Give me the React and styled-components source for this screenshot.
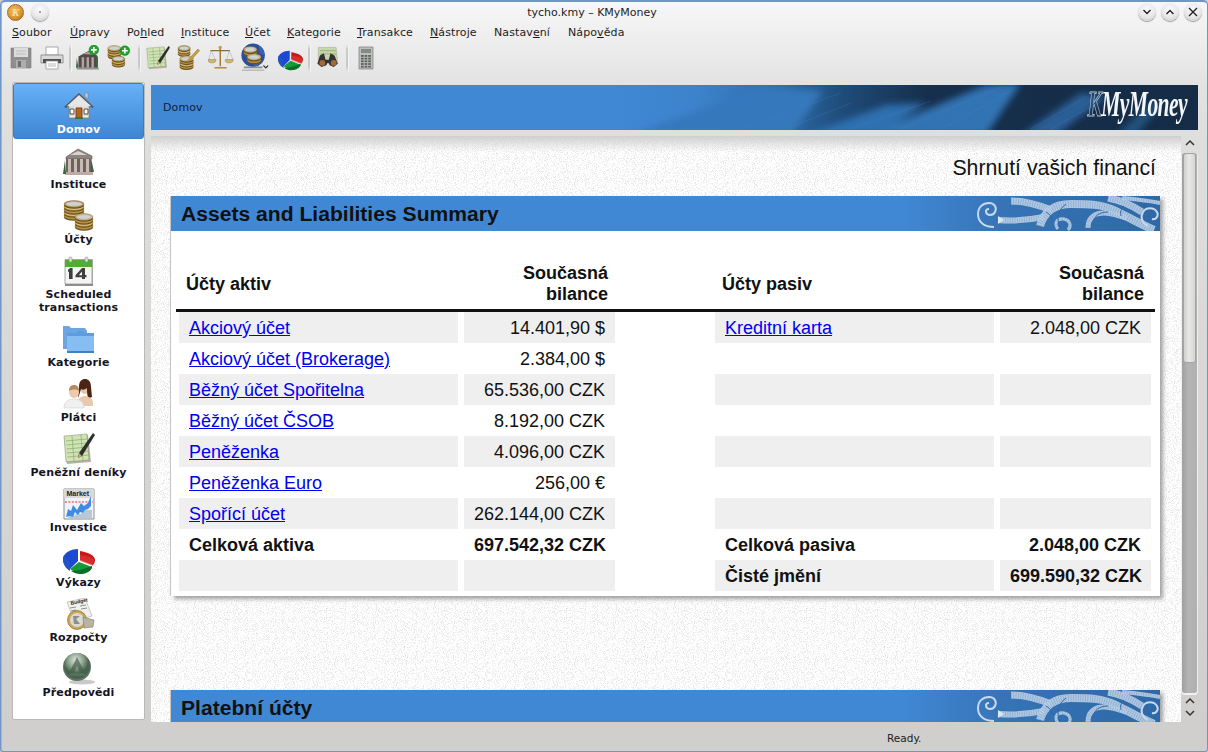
import React from "react";
import styled, { createGlobalStyle } from "styled-components";

const noise = `url("data:image/svg+xml,%3Csvg xmlns='http://www.w3.org/2000/svg' width='240' height='240'%3E%3Cfilter id='n'%3E%3CfeTurbulence type='fractalNoise' baseFrequency='1.1' numOctaves='2' seed='4'/%3E%3CfeColorMatrix values='0 0 0 0 .78 0 0 0 0 .78 0 0 0 0 .78 0 0 0 4 -1.9'/%3E%3C/filter%3E%3Crect width='240' height='240' fill='%23fff'/%3E%3Crect width='240' height='240' filter='url(%23n)'/%3E%3C/svg%3E")`;

const Global = createGlobalStyle`
  html, body { margin: 0; padding: 0; background: #d0cfcd; }
  #root { width: 1208px; height: 752px; overflow: hidden; }
  * { box-sizing: border-box; }
`;

const Win = styled.div`
  width: 1208px; height: 752px; display: flex; flex-direction: column; overflow: hidden;
  font-family: "DejaVu Sans", sans-serif; color: #1a1a1a;
  background: linear-gradient(#f7f7f7 0, #e2e2e2 85px, #dededd 140px, #d0cfcd 720px);
  border: 1px solid #6f95c9; border-width: 2px 1px 1px 1px; border-radius: 5px 5px 3px 3px;
  box-shadow: inset 1px 0 0 #9db7dc;
`;
const TitleBar = styled.div`
  height: 20px; flex: none; display: flex; align-items: center; position: relative; padding: 0 5px 0 4px;
`;
const TitleText = styled.div`
  flex: 1; text-align: center; font-size: 11px; color: #222; transform: translateX(1px);
`;
const WinBtn = styled.span`
  width: 18px; height: 18px; flex: none; border-radius: 50%;
  display: flex; align-items: center; justify-content: center; margin-left: ${p => p.$ml || 5}px;
  background: radial-gradient(circle at 50% 35%, #fafafa 0, #e8e8e8 55%, #bdbdbd 100%);
  box-shadow: 0 1px 1px #9a9a9a;
`;
const AppCoin = styled.span`
  width: 17px; height: 17px; flex: none; border-radius: 50%; margin-left: 2px; border: 1px solid #a8681a;
  background: radial-gradient(circle at 40% 35%, #f2bb5c 0, #d99a32 55%, #a5651a 100%);
  color: #f8e2ad; font: italic bold 11px "Liberation Serif", serif; display: flex; align-items: center; justify-content: center;
`;
const MenuBar = styled.nav`
  height: 20px; flex: none; display: flex; align-items: center; padding-left: 11px;
  font-size: 11px; letter-spacing: 0.1px; color: #1c1c1c;
`;
const MenuLabel = styled.span`
  white-space: pre; width: ${p => p.$w}px; flex: none;
  u { text-decoration: underline; text-underline-offset: 1px; }
`;
const ToolBar = styled.div`
  height: 32px; flex: none; display: flex; align-items: center; padding-left: 4px;
`;
const ToolBtn = styled.span`
  width: ${p => p.$w || 31}px; height: 30px; flex: none; display: flex; align-items: center; justify-content: center;
`;
const ToolSep = styled.span`
  width: 2px; height: 28px; flex: none; margin: 0 2px; background: linear-gradient(transparent, #c9c9c9 20%, #c9c9c9 80%, transparent); box-shadow: 1px 0 0 #f4f4f4;
`;
const Main = styled.div`
  flex: 1; min-height: 0; display: flex; gap: 6px; padding: 8px 9px 0 11px;
`;
const Side = styled.aside`
  width: 133px; height: 638px; flex: none; background: #fff; border: 1px solid #b9b9b7; border-radius: 2px;
  display: flex; flex-direction: column; overflow: hidden;
`;
const SideItem = styled.div`
  display: flex; flex-direction: column; align-items: center; text-align: center;
  padding: 6px 0 3px;
  color: ${p => (p.$active ? "#fff" : "#14141e")};
  ${p => p.$active && `
    height: 56px; padding-bottom: 0; border: 1px solid #3a7cc4; border-radius: 3px;
    background: linear-gradient(#69b1f8 0, #559fe9 40%, #3f86d2 100%);
  `}
`;
const SideIcon = styled.span`
  width: 32px; height: 32px; display: block; flex: none;
`;
const SideLabel = styled.span`
  display: block; margin-top: 1px; font-size: 11px; line-height: 13px; font-weight: 700; letter-spacing: 0.15px;
`;
const Column = styled.div`
  flex: 1; min-width: 0; display: flex; flex-direction: column; margin-top: 3px; gap: 6px;
`;
const Banner = styled.header`
  height: 45px; flex: none; position: relative; overflow: hidden; display: flex; align-items: center; padding-left: 12px;
  font-size: 11px; color: #10223a; letter-spacing: 0.1px;
  background: linear-gradient(90deg, #4088d4 0, #4088d4 44%, #3d83cc 52%, #2f6dab 60%, #1f4c7a 66%, #162f4c 74%, #152c46 100%);
`;
const BannerArt = styled.svg`
  position: absolute; left: 0; top: 0; width: 100%; height: 100%;
`;
const BannerText = styled.span`
  position: relative;
`;
const Logo = styled.div`
  position: absolute; right: 11px; top: 0; height: 45px; display: flex; align-items: flex-start;
  font: italic 700 36px/38px "Liberation Serif", serif; color: #f4f6f8; letter-spacing: -1px; white-space: nowrap;
`;
const LogoInner = styled.span`
  display: inline-block; transform: scaleX(0.6); transform-origin: right center;
  span { color: transparent; -webkit-text-stroke: 0.9px #b9c3cd; }
`;
const ViewRow = styled.div`
  flex: 1; min-height: 0; display: flex;
`;
const Page = styled.main`
  flex: 1; min-width: 0; overflow: hidden; position: relative; padding: 20px 21px 0 20px;
  background-color: #fff; background-image: ${noise};
  &::before { content: ""; position: absolute; left: 0; right: 0; top: 0; height: 16px; background: linear-gradient(rgba(205,205,205,.95), rgba(255,255,255,0)); }
`;
const PageTitle = styled.h1`
  position: relative; margin: 0 4px 15px 0; text-align: right; font: 400 21.3px/25px "Liberation Sans", sans-serif; color: #111;
`;
const Panel = styled.section`
  background: #fff; box-shadow: 3px 3px 4px rgba(90,90,90,.55), -1px 0 0 #c8c8c8; padding-bottom: 5px; margin-bottom: 94px;
  position: relative;
`;
const PanelHead = styled.div`
  height: 35px; position: relative; overflow: hidden; padding-left: 10px; display: flex; align-items: center;
  background: linear-gradient(90deg, #4088d4 0, #4088d4 74%, #3674b6 84%, #2e68a6 100%);
  font: 700 21.1px/35px "Liberation Sans", sans-serif; color: #111;
`;
const Ornament = styled.svg`
  position: absolute; right: 0; top: 0; width: 184px; height: 35px;
`;
const Table = styled.div`
  padding: 32px 5px 0;
  font: 400 18px/31px "Liberation Sans", sans-serif; color: #111;
`;
const Row = styled.div`
  display: grid; grid-template-columns: 279px 151px 88px 279px 151px; column-gap: 6px; padding: 0 3px;
`;
const HeadRow = styled(Row)`
  padding-bottom: 4px; border-bottom: 3px solid #111; align-items: center; font-weight: 700; line-height: 21px;
`;
const HeadCell = styled.div`
  padding: 0 7px; text-align: ${p => (p.$right ? "right" : "left")};
`;
const Cell = styled.div`
  height: 31px; padding: 1px 10px 0; white-space: nowrap; text-align: ${p => (p.$right ? "right" : "left")};
  background: ${p => (p.$shade ? "#efefef" : "transparent")}; font-weight: ${p => (p.$bold ? 700 : 400)};
`;
const AccLink = styled.a`
  color: #0000f0; text-decoration: underline;
`;
const Scroll = styled.div`
  width: 17px; flex: none; display: flex; flex-direction: column; align-items: center;
`;
const ScrollArrow = styled.svg`
  width: 12px; height: 13px; flex: none; display: block;
`;
const Track = styled.div`
  width: 15px; height: 540px; flex: none; margin: 4px 0 1px; border-radius: 3px; background: linear-gradient(90deg, #9f9f9f, #b4b4b4 40%, #b0b0b0); box-shadow: 0 1px 0 1px #f0f0f0;
`;
const Thumb = styled.div`
  width: 13px; height: 210px; margin: 0 1px; border-radius: 3px; border: 1px solid #a4a4a4;
  background: linear-gradient(90deg, #cfcfce, #e8e8e6 45%, #d6d6d4);
`;
const Status = styled.footer`
  height: 29px; flex: none; display: flex; align-items: center; padding: 2px 0 0 886px; font-size: 10.5px; color: #222;
`;

/* icons */
const S = ({ size = 32, children, vb = "0 0 32 32" }) => (
  <svg width={size} height={size} viewBox={vb} style={{ display: "block" }}>{children}</svg>
);
const HouseI = p => (
  <S {...p}>
    <path d="M6 13h20v15H6z" fill="#f3efe6" stroke="#7d7a72" strokeWidth=".8" />
    <path d="M6 17h20M6 21h20M6 25h20" stroke="#c9c4b6" strokeWidth=".8" />
    <path d="M1 17 16 3l15 14-2 1L16 6 3 18z" fill="#55575c" />
    <path d="M4 16 16 5l12 11-1 0H5z" fill="#e6e6e6" />
    <path d="M22 3h3v6l-3-2.5z" fill="#c9c9c9" stroke="#777" strokeWidth=".5" />
    <path d="M13 18h6v10h-6z" fill="#b5651d" stroke="#5a3410" strokeWidth=".8" />
    <path d="M7 19h4v5H7zM21 19h4v5h-4z" fill="#fff" stroke="#55493a" strokeWidth="1" />
    <path d="M12 28.2h8" stroke="#2f7d2c" strokeWidth="1.4" />
  </S>
);
const BankI = p => (
  <S {...p}>
    <path d="M3 12 15 4l14 7v3H3z" fill="#8f8480" stroke="#5e5552" strokeWidth=".6" />
    <path d="M7 10 15 6l9 4z" fill="#d9d3cf" />
    <path d="M3 14h25v13H3z" fill="#6f625e" />
    <path d="M5 14h3v13H5zM11 14h3v13h-3zM17 14h3v13h-3zM23 14h3v13h-3z" fill="#c8bcb6" />
    <path d="M2 27h28v3H2z" fill="#bcaaa3" />
    <path d="M2 15 0 29h3z" fill="#35603a" />
    <path d="M28 13l3 14h-3z" fill="#38663e" />
  </S>
);
const Coin = ({ x, y, w = 16, n = 4 }) => (
  <g>
    {Array.from({ length: n }).map((_, i) => (
      <g key={i}>
        <ellipse cx={x} cy={y + (n - 1 - i) * 3 + 1.4} rx={w / 2} ry="3.4" fill="#6e5119" />
        <ellipse cx={x} cy={y + (n - 1 - i) * 3} rx={w / 2} ry="3.4" fill={i % 2 ? "#dcc27c" : "#bd9a4e"} stroke="#6f5420" strokeWidth=".4" />
      </g>
    ))}
    <ellipse cx={x} cy={y} rx={w / 2 - 1.6} ry="2.4" fill="#cfd2d0" stroke="#8e8f88" strokeWidth=".4" />
  </g>
);
const CoinsI = p => (
  <S {...p}>
    <Coin x={11} y={4} w={20} n={5} />
    <Coin x={21} y={17} w={18} n={4} />
  </S>
);
const CalI = p => (
  <S {...p}>
    <path d="M2 4h28v27H2z" fill="#bbb" />
    <path d="M2 5h27v24H2z" fill="#f4f4f4" stroke="#888" strokeWidth=".7" />
    <path d="M2 5h27v7H2z" fill="#4fae33" />
    <rect x="6" y="2" width="3" height="5" rx="1" fill="#ddd" stroke="#777" strokeWidth=".4" />
    <rect x="22" y="2" width="3" height="5" rx="1" fill="#ddd" stroke="#777" strokeWidth=".4" />
    <path d="M6 24h3.6v-11h-2.2l-2.4 1.8v2.3l1-.7zM19 13h3v7h1.5v2.2H22V24h-3v-1.8h-6.5v-2z M19 16.5l-3.2 3.7H19z" fill="#3e3e3e" fillRule="evenodd" />
    <path d="M2 29h28v2H2z" fill="#8d8d8d" />
  </S>
);
const FolderI = p => (
  <S {...p}>
    <path d="M0 3h6l2 2 14 0 2 3v18H0z" fill="#6ba6e2" />
    <path d="M4 10h9l2-2h5l2 2h9v20H4z" fill="#5c9ce0" />
    <path d="M4 13h27v17H4z" fill="#86bdf2" />
    <path d="M4 28h27v2H4z" fill="#4480bf" />
  </S>
);
const PeopleI = p => (
  <S {...p}>
    <ellipse cx="22" cy="10" rx="5" ry="6" fill="#e8c4a8" />
    <path d="M16 9c0-6 3-8 6-8s6 2 6 8l1 10c-2 1-3 1-4 1-1-4-1-7-1-10-2 2-5 2-6 1-1 3-2 7-3 9z" fill="#4b2413" />
    <path d="M15 24c0-4 4-6 7-6s8 2 8 7v3H15z" fill="#e8c9ad" />
    <ellipse cx="11" cy="14" rx="5" ry="6" fill="#efc9ac" />
    <path d="M6 13c0-4 2-6 5-6s5 2 5 6c-2-2-7-2-10 0z" fill="#b8895e" />
    <path d="M1 30c0-6 4-9 10-9s10 3 10 9z" fill="#f0f0f0" stroke="#c9c9c9" strokeWidth=".5" />
  </S>
);
const LedgerI = p => (
  <S {...p}>
    <path d="M1 4 25 2l3 27-24 2z" fill="#b9b1a2" />
    <path d="M1 3 24 1l2 26L3 29z" fill="#cfe3b5" stroke="#7d8b6d" strokeWidth=".5" />
    <path d="M3 8l21-2M3.4 12l21-2M3.7 16l21-2M4 20l21-2M4.4 24l21-2M9 3l2 25M18 2l2 25" stroke="#7fa060" strokeWidth=".6" />
    <path d="M30 0l2 2-13 21-4 2 1-5z" fill="#2e2e2e" />
    <path d="M16 20l3 3-4 2z" fill="#caa76a" />
  </S>
);
const MarketI = p => (
  <S {...p}>
    <path d="M1 1h30v30H1z" fill="#f0f4f8" stroke="#8c8c8c" />
    <path d="M1 1h30v9H1z" fill="#d9d9d9" />
    <text x="3.5" y="8" fontFamily="Liberation Sans" fontSize="7" fontWeight="700" fill="#222">Market</text>
    <path d="M2 14h28" stroke="#e2352e" strokeDasharray="2 1.4" />
    <path d="M5 30l3-4 3 2 3-3 4 1 4-4 7 0v8H5z" fill="#b7c8d8" />
    <path d="M3 29l2-8 3 2 2-6 4 5 4-7 3 3 4-3 3-7v10l-3 3-3 1-2 3-3-1-2 3-3-3-2 5-3-1z" fill="#3d8de6" />
  </S>
);
const PieI = p => (
  <S {...p}>
    <path d="M0 17c0-7 7-11 15-11v12l-8 8c-4-2-7-5-7-9z" fill="#1c49d3" />
    <path d="M0 15c0 6 2 10 7 13v-9L1 12z" fill="#2253c0" />
    <path d="M17 8c7 1 15 4 15 9 0 2-1 4-2 5l-13-5z" fill="#c9161c" />
    <path d="M17 12c6 1 12 2 14 5l-1 6-13-5z" fill="#e33d3a" opacity=".6" />
    <path d="M7 26l9-7 13 5c-3 4-9 5-13 5-4 0-7-1-9-3z" fill="#159a3a" />
    <path d="M8 28c3 2 6 3 9 3 5 0 10-2 12-6v-2l-12 4z" fill="#0a6e25" />
  </S>
);
const BudgetI = p => (
  <S {...p}>
    <path d="M4 4 22 0l7 18-18 5z" fill="#f0f0ee" stroke="#999" strokeWidth=".5" />
    <text x="8" y="7" fontFamily="Liberation Sans" fontSize="5" fontWeight="700" fill="#222" transform="rotate(-12 8 7)">Budget</text>
    <path d="M7 10l6-1M17 8l6-1M8 13l5-1M18 11l6-1M9 16l4-1" stroke="#777" strokeWidth=".8" />
    <circle cx="14" cy="22" r="9.5" fill="#cda74f" stroke="#77602a" strokeWidth=".6" />
    <circle cx="14" cy="22" r="7" fill="#d9dad6" />
    <path d="M10 18h7l-4 3 4 5h-6z" fill="#8d8f8b" />
    <path d="M20 19l11 3-1 7-9 1z" fill="#b9b3a4" stroke="#6e6a5d" strokeWidth=".5" />
  </S>
);
const ForecastI = p => (
  <S {...p}>
    <defs><radialGradient id="fg" cx=".45" cy=".28"><stop offset="0" stopColor="#dfe6de" /><stop offset=".55" stopColor="#93a994" /><stop offset="1" stopColor="#4a6350" /></radialGradient></defs>
    <ellipse cx="19" cy="29" rx="13" ry="2.5" fill="#c9c9c9" />
    <circle cx="14" cy="14" r="14" fill="#5f7566" />
    <circle cx="14" cy="13" r="13" fill="url(#fg)" />
    <path d="M14 4 5 22h5l4-9 4 9h5z" fill="#46604c" opacity=".7" />
    <path d="M8 20h13l2 3H6z" fill="#55705b" />
  </S>
);
const SaveI = () => (
  <S size={24} vb="0 0 24 24">
    <path d="M2 2h20v20H2z" fill="#8f8f8f" stroke="#7a7a7a" strokeWidth=".6" />
    <path d="M5 2h14v9H5z" fill="#dcdcdc" />
    <path d="M7 5h10M7 8h10" stroke="#bdbdbd" />
    <path d="M7 14h10v8H7z" fill="#adadad" />
    <path d="M9 15h3v6H9z" fill="#6f6f6f" />
  </S>
);
const PrintI = () => (
  <S size={24} vb="0 0 24 24">
    <path d="M6 1h12v8H6z" fill="#fff" stroke="#8a8a8a" strokeWidth=".7" />
    <path d="M1 9h22v8H1z" fill="#d8d8d8" stroke="#777" strokeWidth=".7" />
    <path d="M3 13h18v4H3z" fill="#4f4f4f" />
    <path d="M6 15h12v8H6z" fill="#fff" stroke="#8a8a8a" strokeWidth=".7" />
    <path d="M8 18h8M8 20h8" stroke="#bbb" />
  </S>
);
const Plus = ({ x = 24, y = 6 }) => (
  <g>
    <circle cx={x} cy={y} r="6" fill="#1fa52c" stroke="#0d6e16" strokeWidth=".5" />
    <path d={`M${x - 3.5} ${y}h7M${x} ${y - 3.5}v7`} stroke="#fff" strokeWidth="2" />
  </g>
);
const NewBank = () => (
  <S size={26}>
    <path d="M3 14 16 7l10 6v15H3z" fill="#55494a" />
    <path d="M7 11 16 8l6 4z" fill="#a89c97" />
    <path d="M7 15h3v13H7zM13 15h3v13h-3zM19 15h3v13h-3z" fill="#b0a5a0" />
    <path d="M1 16 0 28h3zM24 14h3v14h-3z" fill="#3d5f42" />
    <path d="M1 28h27v2H1z" fill="#98908c" />
    <Plus x={22} y={6} />
  </S>
);
const NewCoins = () => (
  <S size={26}><Coin x={9} y={4} w={16} n={4} /><Coin x={14} y={17} w={16} n={3} /><Plus x={22} y={7} /></S>
);
const LedgerT = () => <LedgerI size={24} />;
const CoinsEdit = () => (
  <S size={26}><Coin x={10} y={4} w={15} n={3} /><Coin x={13} y={17} w={17} n={4} /><path d="M27 5l2 2-12 13-3 1 1-3z" fill="#c9a23a" stroke="#6b5716" strokeWidth=".5" /></S>
);
const Scales = () => (
  <S size={26}>
    <path d="M14.2 3h1.8v23h-1.8z" fill="#9b7a3a" />
    <path d="M3 7h24" stroke="#8d6f35" strokeWidth="1.4" />
    <path d="M4 7 1 18h8zM26 7l-3 11h8z" fill="none" stroke="#a4a4a4" strokeWidth=".6" />
    <path d="M0 18h10c0 3-2 4-5 4s-5-1-5-4zM21 18h10c0 3-2 4-5 4s-5-1-5-4z" fill="#d6b672" stroke="#8a6c2d" strokeWidth=".5" />
    <path d="M8 27h15v2H8z" fill="#b08c46" />
    <circle cx="15" cy="3" r="2" fill="#c29e55" />
  </S>
);
const GlobeCoins = () => (
  <S size={30}>
    <circle cx="14" cy="13" r="12.5" fill="#2a4f9e" />
    <path d="M20 3c4 2 6 6 6 10l-5-2zM15 18l7 1-2 5-5 1z" fill="#3c63b3" />
    <Coin x={11} y={7} w={14} n={2} />
    <Coin x={15} y={15} w={15} n={2} />
    <path d="M4 26h20" stroke="#8e8e8e" strokeWidth="2" />
    <path d="M2 29h24" stroke="#bcbcbc" strokeWidth="1.6" />
    <path d="M25 24l2.5 2.5L30 24" stroke="#333" strokeWidth="1.2" fill="none" />
  </S>
);
const Binoc = () => (
  <S size={26}>
    <path d="M4 3h22l2 20H4z" fill="#c8d6ae" stroke="#8f9a80" strokeWidth=".5" />
    <path d="M6 7h20M6 11h20" stroke="#93ad72" />
    <path d="M6 13l5-3 2 8h4l2-8 5 3 4 10-5 4-5-2-1-3h-2l-1 3-6 2-5-4z" fill="#333" />
    <circle cx="9" cy="22" r="3.6" fill="#a06a3a" />
    <circle cx="23" cy="22" r="3.6" fill="#a06a3a" />
  </S>
);
const Calc = () => (
  <S size={24} vb="0 0 24 24">
    <path d="M5 1h14v22H5z" fill="#bdbdbd" stroke="#7d7d7d" strokeWidth=".7" />
    <path d="M7 3h10v4H7z" fill="#7f8c7e" />
    {[0, 1, 2, 3, 4].map(r => [0, 1, 2].map(c => (
      <rect key={`${r}${c}`} x={7 + c * 3.6} y={9 + r * 2.7} width="2.7" height="1.8" fill="#5e5e5e" />
    )))}
  </S>
);
const Ch = ({ d }) => (
  <svg width="10" height="8" viewBox="0 0 10 8"><path d={d} fill="none" stroke="#222" strokeWidth="1.4" /></svg>
);

const bands = [
  ["M22 24C34 25 48 25 68 21", 6],
  ["M35 5C46 5 60 8 75 14", 7],
  ["M64 30C68 16 78 8 95 8C112 8 126 8 140 15C150 20 162 27 178 34", 8],
  ["M112 32C112 22 118 17 128 17C136 17 142 20 150 22", 5],
  ["M132 2C144 4 154 8 166 16", 7],
  ["M146 2C156 3 168 4 184 7", 4],
  ["M82 33C78 28 80 22 88 23C94 24 96 30 92 34", 3],
];
const curls = [
  "M18 31C8 31 2 26 2 18C2 11 7 7 13 7C19 7 21 12 19 16C17 20 11 20 10 16C9.5 14 11 13 13 13",
  "M172 30C166 27 164 21 167 16C170 11 178 11 181 16C183 20 180 24 176 23",
];
const OrnamentArt = () => (
  <Ornament viewBox="0 0 184 35">
    <defs><filter id="orn-soft"><feGaussianBlur stdDeviation=".4" /></filter></defs>
    <g fill="none" filter="url(#orn-soft)">
      {bands.map(([d, w]) => (
        <g key={d}>
          <path d={d} stroke="#bcd0e6" strokeWidth={w} opacity=".9" />
          <path d={d} stroke="#3f79b9" strokeWidth={w - 1} strokeDasharray=".7 1.7" opacity=".35" />
        </g>
      ))}
      {curls.map(d => <path key={d} d={d} stroke="#c9d8ea" strokeWidth="2" />)}
      <path d="M22 20l6 4-6 4z" fill="#dce6f1" />
      <path d="M90 8c-8 6-10 14-6 24M132 16c-6 0-12 2-14 8M70 16c4 2 6 5 6 9M148 10c-3 3-4 6-3 10" stroke="#2e66a3" strokeWidth="1" />
    </g>
  </Ornament>
);

const nav = [
  ["Domov", HouseI, true],
  ["Instituce", BankI],
  ["Účty", CoinsI],
  ["Scheduled transactions", CalI],
  ["Kategorie", FolderI],
  ["Plátci", PeopleI],
  ["Peněžní deníky", LedgerI],
  ["Investice", MarketI],
  ["Výkazy", PieI],
  ["Rozpočty", BudgetI],
  ["Předpovědi", ForecastI],
];

const menus = [
  ["", "S", "oubor", 58], ["", "Ú", "pravy", 57], ["Po", "h", "led", 54], ["", "I", "nstituce", 64], ["", "Ú", "čet", 42],
  ["", "K", "ategorie", 70], ["", "T", "ransakce", 73], ["", "N", "ástroje", 64], ["Nastav", "e", "ní", 74], ["Nápo", "v", "ěda", 60],
];

const rows = [
  ["Akciový účet", "14.401,90 $", "Kreditní karta", "2.048,00 CZK"],
  ["Akciový účet (Brokerage)", "2.384,00 $", "", ""],
  ["Běžný účet Spořitelna", "65.536,00 CZK", "", ""],
  ["Běžný účet ČSOB", "8.192,00 CZK", "", ""],
  ["Peněženka", "4.096,00 CZK", "", ""],
  ["Peněženka Euro", "256,00 €", "", ""],
  ["Spořící účet", "262.144,00 CZK", "", ""],
];

export default function App() {
  return (
    <Win>
      <Global />
      <TitleBar>
        <AppCoin>K</AppCoin>
        <WinBtn $ml={7}><svg width="4" height="4"><circle cx="2" cy="2" r="1" fill="#888" /></svg></WinBtn>
        <TitleText>tycho.kmy – KMyMoney</TitleText>
        <WinBtn><Ch d="M1.5 2 5 5.5 8.5 2" /></WinBtn>
        <WinBtn><Ch d="M1.5 6 5 2.5 8.5 6" /></WinBtn>
        <WinBtn><svg width="10" height="10" viewBox="0 0 10 10"><path d="M1 1l8 8M9 1l-8 8" stroke="#222" strokeWidth="1.4" /></svg></WinBtn>
      </TitleBar>
      <MenuBar>
        {menus.map(([a, u, b, w]) => (
          <MenuLabel key={a + u + b} $w={w}>{a}<u>{u}</u>{b}</MenuLabel>
        ))}
      </MenuBar>
      <ToolBar>
        <ToolBtn><SaveI /></ToolBtn>
        <ToolBtn><PrintI /></ToolBtn>
        <ToolSep />
        <ToolBtn><NewBank /></ToolBtn>
        <ToolBtn $w={32}><NewCoins /></ToolBtn>
        <ToolSep />
        <ToolBtn><LedgerT /></ToolBtn>
        <ToolBtn $w={32}><CoinsEdit /></ToolBtn>
        <ToolBtn><Scales /></ToolBtn>
        <ToolBtn $w={38}><GlobeCoins /></ToolBtn>
        <ToolBtn $w={32}><PieI size={25} /></ToolBtn>
        <ToolSep />
        <ToolBtn $w={32}><Binoc /></ToolBtn>
        <ToolSep />
        <ToolBtn $w={32}><Calc /></ToolBtn>
      </ToolBar>
      <Main>
        <Side>
          {nav.map(([label, I, active]) => (
            <SideItem key={label} $active={active}>
              <SideIcon><I /></SideIcon>
              <SideLabel>{label}</SideLabel>
            </SideItem>
          ))}
        </Side>
        <Column>
          <Banner>
            <BannerArt viewBox="0 0 1047 45">
              <defs>
                <filter id="ban-blur" x="-20%" y="-50%" width="140%" height="200%"><feGaussianBlur stdDeviation="3.5" /></filter>
              </defs>
              <g filter="url(#ban-blur)">
                <path d="M480 50 640 50 672 6 610 2z" fill="#3478bc" />
                <path d="M655 50 725 50 775 18 735 20z" fill="#2f70b0" />
                <path d="M715 50 835 50 870 -2 835 0z" fill="#3173b3" />
                <path d="M870 50 905 50 955 12 930 8z" fill="#2a5f96" />
                <path d="M965 50 985 50 1010 20 1000 18z" fill="#24527f" />
              </g>
              <g stroke="#4d8ac8" strokeWidth=".7" opacity=".35">
                <path d="M590 44 690 8M640 42 700 18M700 44 780 16M750 44 850 2M790 44 860 6M880 44 935 12M900 44 950 16" />
              </g>
            </BannerArt>
            <BannerText>Domov</BannerText>
            <Logo><LogoInner><span>K</span>MyMoney</LogoInner></Logo>
          </Banner>
          <ViewRow>
            <Page>
              <PageTitle>Shrnutí vašich financí</PageTitle>
              <Panel>
                <PanelHead>Assets and Liabilities Summary<OrnamentArt /></PanelHead>
                <Table>
                  <HeadRow>
                    <HeadCell>Účty aktiv</HeadCell>
                    <HeadCell $right>Současná<br />bilance</HeadCell>
                    <span />
                    <HeadCell>Účty pasiv</HeadCell>
                    <HeadCell $right>Současná<br />bilance</HeadCell>
                  </HeadRow>
                  {rows.map(([n, v, n2, v2], i) => (
                    <Row key={n}>
                      <Cell $shade={i % 2 === 0}><AccLink href="#">{n}</AccLink></Cell>
                      <Cell $shade={i % 2 === 0} $right>{v}</Cell>
                      <span />
                      <Cell $shade={i % 2 === 0}>{n2 && <AccLink href="#">{n2}</AccLink>}</Cell>
                      <Cell $shade={i % 2 === 0} $right>{v2}</Cell>
                    </Row>
                  ))}
                  <Row>
                    <Cell $bold>Celková aktiva</Cell>
                    <Cell $bold $right>697.542,32 CZK</Cell>
                    <span />
                    <Cell $bold>Celková pasiva</Cell>
                    <Cell $bold $right>2.048,00 CZK</Cell>
                  </Row>
                  <Row>
                    <Cell $shade />
                    <Cell $shade />
                    <span />
                    <Cell $shade $bold>Čisté jmění</Cell>
                    <Cell $shade $bold $right>699.590,32 CZK</Cell>
                  </Row>
                </Table>
              </Panel>
              <Panel>
                <PanelHead>Platební účty<OrnamentArt /></PanelHead>
              </Panel>
            </Page>
            <Scroll>
              <ScrollArrow viewBox="0 0 12 13"><path d="M2 9l4-4 4 4" fill="none" stroke="#333" strokeWidth="1.5" /></ScrollArrow>
              <Track><Thumb /></Track>
              <ScrollArrow viewBox="0 0 12 13"><path d="M2 9l4-4 4 4" fill="none" stroke="#333" strokeWidth="1.5" /></ScrollArrow>
              <ScrollArrow viewBox="0 0 12 13"><path d="M2 4l4 4 4-4" fill="none" stroke="#333" strokeWidth="1.5" /></ScrollArrow>
            </Scroll>
          </ViewRow>
        </Column>
      </Main>
      <Status>Ready.</Status>
    </Win>
  );
}
